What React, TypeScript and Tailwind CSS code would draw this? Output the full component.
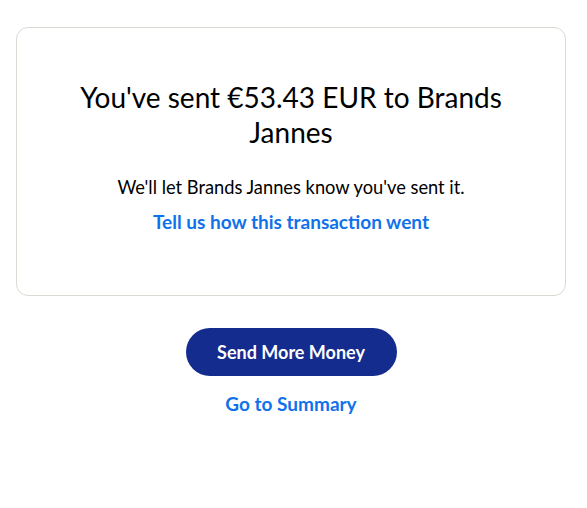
export default function App() {
  return (
    <div className="w-[587px] h-[508px] bg-white" style={{ fontFamily: 'Lato, "Open Sans", sans-serif' }}>
      <div className="w-[582px] pt-[27px] px-4">
        <div className="w-[550px] h-[269px] border border-[#dcd9d2] rounded-[12px] flex flex-col items-center pt-[52px]">
          <h1 className="text-[28px] leading-[35px] text-[#000] text-center w-[440px] font-normal">
            You've sent €53.43 EUR to Brands Jannes
          </h1>
          <p className="mt-[25px] text-[18.3px] leading-[24px] text-black">We'll let Brands Jannes know you've sent it.</p>
          <a className="mt-[11px] text-[19px] leading-[24px] font-bold text-[#1072eb]">Tell us how this transaction went</a>
        </div>
      </div>
      <div className="w-[582px] flex flex-col items-center mt-[32px]">
        <button className="w-[211px] h-[48px] rounded-full bg-[#142c8e] text-white text-[18px] font-bold">Send More Money</button>
        <a className="mt-[16px] text-[19px] leading-[24px] font-bold text-[#1072eb]">Go to Summary</a>
      </div>
    </div>
  );
}
